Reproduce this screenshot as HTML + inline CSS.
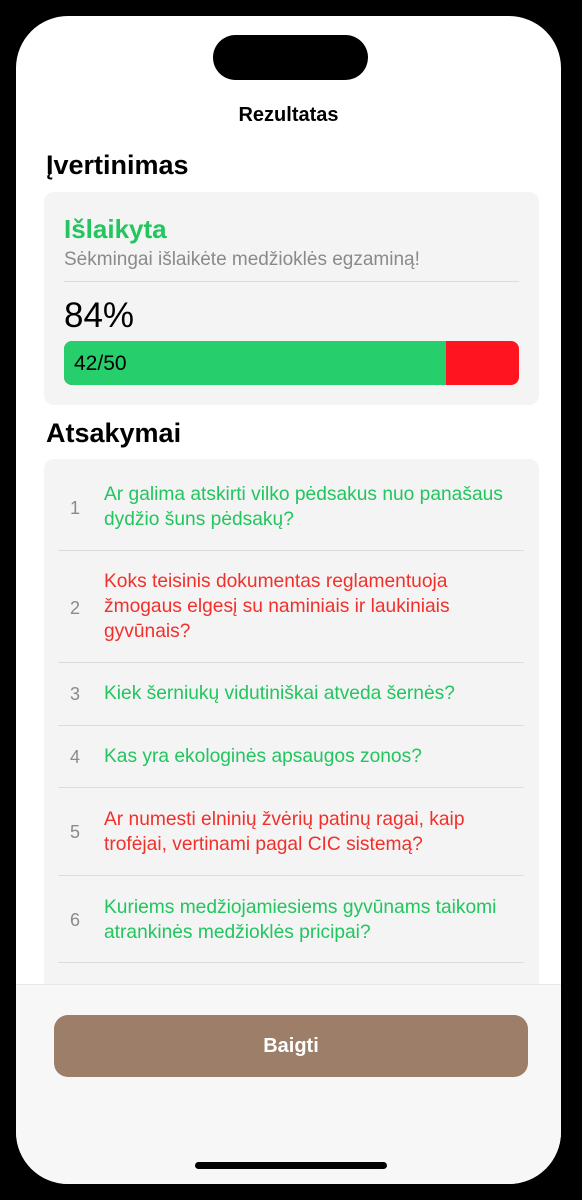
<!DOCTYPE html><html><head><meta charset="utf-8"><style>
body{margin:0;width:582px;height:1200px;background:#000;position:relative;overflow:hidden;font-family:"Liberation Sans",sans-serif}
.scr{position:absolute;left:16px;top:16px;width:545px;height:1168px;background:#fff;border-radius:52px;overflow:hidden}
.a{position:absolute}
.g{color:#22c55e}.r{color:#f2302b}
.n{position:absolute;left:26px;color:#8a8a8a;font-size:18px}
.t{position:absolute;left:60px;width:430px;font-size:19.2px;line-height:25px}
.sep{position:absolute;left:14px;width:466px;height:1px;background:#dcdcdc}
</style></head><body>
<div class="scr">
<div class="a" style="left:197px;top:19px;width:155px;height:45px;background:#000;border-radius:23px"></div>
<div class="a" style="left:0;width:545px;top:88px;text-align:center;font-size:20px;font-weight:600">Rezultatas</div>
<div class="a" style="left:30px;top:134px;font-size:27px;font-weight:bold">Įvertinimas</div>
<div class="a" style="left:28px;top:176px;width:495px;height:213px;background:#f4f4f4;border-radius:10px">
 <div class="a g" style="left:20px;top:22px;font-size:26px;font-weight:bold">Išlaikyta</div>
 <div class="a" style="left:20px;top:57px;font-size:19px;color:#8a8a8a">Sėkmingai išlaikėte medžioklės egzaminą!</div>
 <div class="a" style="left:20px;top:89px;width:455px;height:1px;background:#dcdcdc"></div>
 <div class="a" style="left:20px;top:104px;font-size:35px">84%</div>
 <div class="a" style="left:20px;top:149px;width:455px;height:44px;background:#ff1420;border-radius:8px;overflow:hidden">
  <div class="a" style="left:0;top:0;width:382px;height:44px;background:#26cf6b"></div>
  <div class="a" style="left:10px;top:11px;font-size:21px">42/50</div>
 </div>
</div>
<div class="a" style="left:30px;top:402px;font-size:27px;font-weight:bold">Atsakymai</div>
<div class="a" style="left:28px;top:443px;width:495px;height:560px;background:#f4f4f4;border-radius:10px">
 <div class="n" style="top:39px">1</div><div class="t g" style="top:23px">Ar galima atskirti vilko pėdsakus nuo panašaus dydžio šuns pėdsakų?</div>
 <div class="sep" style="top:91px"></div>
 <div class="n" style="top:139px">2</div><div class="t r" style="top:110px;width:380px">Koks teisinis dokumentas reglamentuoja žmogaus elgesį su naminiais ir laukiniais gyvūnais?</div>
 <div class="sep" style="top:203px"></div>
 <div class="n" style="top:225px">3</div><div class="t g" style="top:222px">Kiek šerniukų vidutiniškai atveda šernės?</div>
 <div class="sep" style="top:266px"></div>
 <div class="n" style="top:288px">4</div><div class="t g" style="top:285px">Kas yra ekologinės apsaugos zonos?</div>
 <div class="sep" style="top:328px"></div>
 <div class="n" style="top:363px">5</div><div class="t r" style="top:348px;width:390px">Ar numesti elninių žvėrių patinų ragai, kaip trofėjai, vertinami pagal CIC sistemą?</div>
 <div class="sep" style="top:416px"></div>
 <div class="n" style="top:451px">6</div><div class="t g" style="top:436px;width:420px">Kuriems medžiojamiesiems gyvūnams taikomi atrankinės medžioklės pricipai?</div>
 <div class="sep" style="top:503px"></div>
</div>
<div class="a" style="left:0;top:968px;width:545px;height:200px;background:#f7f7f7;border-top:1px solid #e8e8e8"></div>
<div class="a" style="left:38px;top:999px;width:474px;height:62px;background:#9c7e69;border-radius:14px;color:#fff;font-size:20px;font-weight:600;text-align:center;line-height:62px">Baigti</div>
<div class="a" style="left:179px;top:1146px;width:192px;height:7px;background:#000;border-radius:4px"></div>
</div>
</body></html>
